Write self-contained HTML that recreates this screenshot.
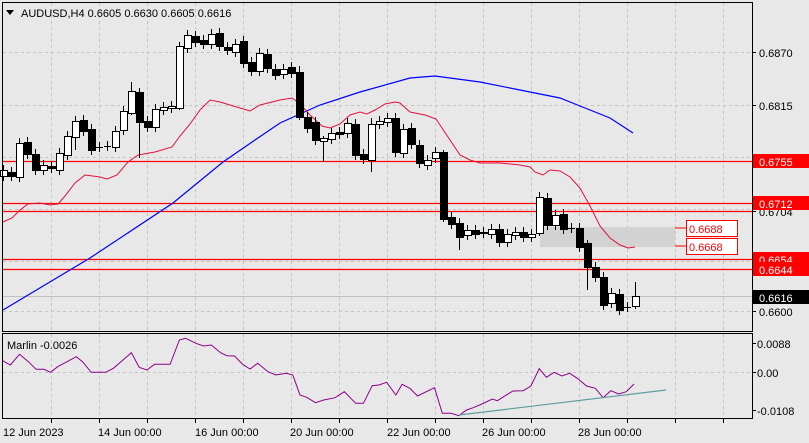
<!DOCTYPE html>
<html><head><meta charset="utf-8"><style>
html,body{margin:0;padding:0;background:#e8e8e8;width:809px;height:443px;overflow:hidden}
svg{display:block}
text{font-family:"Liberation Sans","DejaVu Sans",sans-serif;font-size:11px}
</style></head><body>
<svg id="s" width="809" height="443" xmlns="http://www.w3.org/2000/svg">
<rect width="809" height="443" fill="#e8e8e8"/>
<g id="grid"></g>
<rect x="540" y="227" width="135" height="20" fill="#d2d2d2"/>
<g id="hl"></g>
<polyline id="blue" fill="none" stroke="#0000ff" stroke-width="1.2"/>
<polyline id="red" fill="none" stroke="#e0103a" stroke-width="1"/>
<g id="candles"></g>
<line x1="675" y1="228" x2="686" y2="228" stroke="#f00"/>
<line x1="675" y1="246" x2="686" y2="246" stroke="#f00"/>
<rect x="686.5" y="220.5" width="51" height="16" fill="#fff" stroke="#f00"/>
<rect x="686.5" y="238.5" width="51" height="16" fill="#fff" stroke="#f00"/>
<text x="689" y="233" fill="#f00" font-size="12">0.6688</text>
<text x="689" y="251" fill="#f00" font-size="12">0.6668</text>
<rect x="2.5" y="2.5" width="750" height="329" fill="none" stroke="#000"/>
<rect x="2.5" y="333.5" width="750" height="85" fill="none" stroke="#000"/>
<polygon points="6,10 14,10 10,15" fill="#000"/>
<text x="21" y="17" font-size="12">AUDUSD,H4  0.6605 0.6630 0.6605 0.6616</text>
<text x="7" y="349">Marlin -0.0026</text>
<polyline id="marlin" fill="none" stroke="#8b008b" stroke-width="1"/>
<line x1="459" y1="415" x2="666" y2="390" stroke="#5f9ea0" stroke-width="1.2"/>
<g id="axis"></g>
</svg>
<script>
var NS="http://www.w3.org/2000/svg";
function el(p,t,a){var e=document.createElementNS(NS,t);for(var k in a)e.setAttribute(k,a[k]);p.appendChild(e);return e;}
var g=document.getElementById('grid');
[51,99,147,195,243,291,339,387,435,483,531,579,627,675,723].forEach(function(x){
 el(g,'line',{x1:x+.5,y1:3,x2:x+.5,y2:331,stroke:'#c4c4c4','stroke-dasharray':'3,3'});
 el(g,'line',{x1:x+.5,y1:334,x2:x+.5,y2:418,stroke:'#c4c4c4','stroke-dasharray':'3,3'});
 el(g,'line',{x1:x+.5,y1:419,x2:x+.5,y2:423,stroke:'#000'});
});
[52,105,157,209,261,311].forEach(function(y){el(g,'line',{x1:3,y1:y+.5,x2:752,y2:y+.5,stroke:'#c4c4c4','stroke-dasharray':'3,3'});});
el(g,'line',{x1:3,y1:372.5,x2:752,y2:372.5,stroke:'#c4c4c4','stroke-dasharray':'3,3'});
el(g,'line',{x1:3,y1:296.5,x2:752,y2:296.5,stroke:'#c0c0c0'});
var hl=document.getElementById('hl');
[161,203,211,259,269].forEach(function(y){el(hl,'line',{x1:3,y1:y+.5,x2:752,y2:y+.5,stroke:'#f00','stroke-width':1.2});});
var C=[[170,176,0],[172,176,1],[143,177,0],[142,154,1],[154,170,1],[165,170,0],[166,168,1],[153,170,0],[136,155,0],[121,137,0],[120,131,1],[129,150,1],[147,147,2],[146,146,2],[131,147,0],[111,130,0],[91,113,0],[92,122,1],[121,127,1],[109,127,0],[107,110,0],[106,108,0],[46,108,0],[35,48,0],[36,42,1],[40,44,1],[34,44,0],[33,46,1],[47,50,1],[44,52,0],[41,63,1],[62,71,1],[53,71,0],[54,68,1],[69,75,1],[69,74,0],[67,73,1],[72,117,1],[117,128,1],[122,140,1],[138,141,0],[133,139,0],[132,134,1],[123,133,0],[124,155,1],[154,159,1],[124,160,0],[121,124,0],[118,122,0],[118,152,1],[129,153,0],[128,144,1],[145,163,1],[160,165,0],[152,158,0],[152,219,1],[217,224,1],[223,237,1],[230,235,0],[230,234,1],[232,233,1],[229,234,0],[229,242,1],[234,242,0],[232,235,0],[232,237,1],[234,237,0],[197,233,0],[198,225,1],[215,225,0],[214,229,1],[228,228,2],[228,247,1],[243,267,1],[267,277,1],[277,305,1],[293,303,0],[294,310,1],[307,307,2],[296,306,0]];
var W={17:[88,158],22:[42,110],37:[66,120],40:[136,162],46:[118,172],55:[150,222],57:[218,250],67:[192,236],73:[240,290],79:[282,309],16:[82,115],9:[116,150]};
var cg=document.getElementById('candles');
C.forEach(function(c,i){var x=3+8*i;var w=W[i]||[c[0]-5,c[1]+5];
 el(cg,'line',{x1:x+.5,y1:w[0],x2:x+.5,y2:w[1],stroke:'#000'});
 if(c[2]==2){el(cg,'line',{x1:x-3,y1:c[0]+.5,x2:x+4,y2:c[0]+.5,stroke:'#000'});}
 else el(cg,'rect',{x:x-3+.5,y:c[0]+.5,width:7,height:Math.max(1,c[1]-c[0]),fill:c[2]?'#000':'#fff',stroke:'#000'});
});
function pts(a){return a.map(function(p){return p[0]+','+p[1]}).join(' ');}
document.getElementById('red').setAttribute('points',pts([[3,222],[12,218],[20,210],[28,204],[40,203],[50,205],[58,204],[65,196],[75,183],[85,175],[100,177],[107,179],[117,175],[128,162],[138,155],[155,152],[172,147],[180,136],[190,124],[200,110],[210,100],[220,102],[240,108],[250,111],[260,105],[280,100],[292,98],[300,104],[310,115],[322,126],[330,128],[340,124],[350,115],[360,112],[367,114],[375,110],[385,104],[395,102],[400,103],[410,112],[425,115],[436,119],[440,125],[450,140],[460,155],[470,160],[480,163],[500,163],[520,165],[530,167],[535,172],[543,175],[550,170],[560,171],[570,177],[580,188],[590,206],[600,226],[610,238],[620,245],[628,248],[635,247]]));
document.getElementById('blue').setAttribute('points',pts([[3,310],[90,258],[173,203],[223,162],[255,140],[280,123],[320,105],[360,92],[410,78],[435,76],[480,82],[520,90],[560,98],[580,106],[610,118],[633,133]]));
var M=[[5,122],[20,135],[38,103],[55,125],[70,148],[85,148],[98,157],[112,140],[130,125],[148,110],[160,125],[177,157],[205,157],[220,145],[255,98],[270,142],[285,150],[300,133],[330,133],[348,60],[360,55],[380,70],[395,78],[410,75],[428,98],[440,107],[455,108],[470,132],[485,147],[500,130],[520,155],[535,165],[555,160],[568,165],[582,225],[595,232],[612,248],[628,240],[650,233],[668,215],[690,250],[705,250],[722,197],[735,195],[750,187],[768,225],[780,193],[795,205],[810,228],[843,203],[858,280],[875,280],[890,287],[905,270],[918,263],[935,252],[955,237],[965,242],[980,227],[995,213],[1015,212],[1030,198],[1046,146],[1060,172],[1075,157],[1090,168],[1105,160],[1120,175],[1138,198],[1155,205],[1170,233],[1185,212],[1200,222],[1215,215],[1230,192]];
document.getElementById('marlin').setAttribute('points',pts(M.map(function(p){return [(p[0]/1.94).toFixed(1),(320+p[1]/3).toFixed(1)];})));
var ax=document.getElementById('axis');
[[52,'0.6870'],[105,'0.6815'],[157,'0.6765'],[211,'0.6704'],[311,'0.6600']].forEach(function(a){
 el(ax,'line',{x1:752,y1:a[0]+.5,x2:756,y2:a[0]+.5,stroke:'#000'});
 var t=el(ax,'text',{x:759,y:a[0]+5,'font-size':12});t.textContent=a[1];});
[[161,'0.6755'],[259,'0.6654'],[203,'0.6712'],[269,'0.6644']].forEach(function(a){
 el(ax,'rect',{x:753,y:a[0]-7,width:56,height:14,fill:'#f00'});
 var t=el(ax,'text',{x:759,y:a[0]+5,fill:'#fff','font-size':12});t.textContent=a[1];});
el(ax,'rect',{x:753,y:290,width:56,height:14,fill:'#000'});
var t=el(ax,'text',{x:759,y:302,fill:'#fff','font-size':12});t.textContent='0.6616';
[[343,'0.0088'],[372,'0.00'],[410,'-0.0108']].forEach(function(a){
 el(ax,'line',{x1:752,y1:a[0]+.5,x2:756,y2:a[0]+.5,stroke:'#000'});
 var t=el(ax,'text',{x:757,y:a[0]+5,'font-size':12});t.textContent=a[1];});
[[3,'12 Jun 2023'],[98,'14 Jun 00:00'],[195,'16 Jun 00:00'],[290,'20 Jun 00:00'],[387,'22 Jun 00:00'],[482,'26 Jun 00:00'],[578,'28 Jun 00:00']].forEach(function(a){
 var t=el(ax,'text',{x:a[0],y:436,'font-size':12});t.textContent=a[1];});
</script>
</body></html>
